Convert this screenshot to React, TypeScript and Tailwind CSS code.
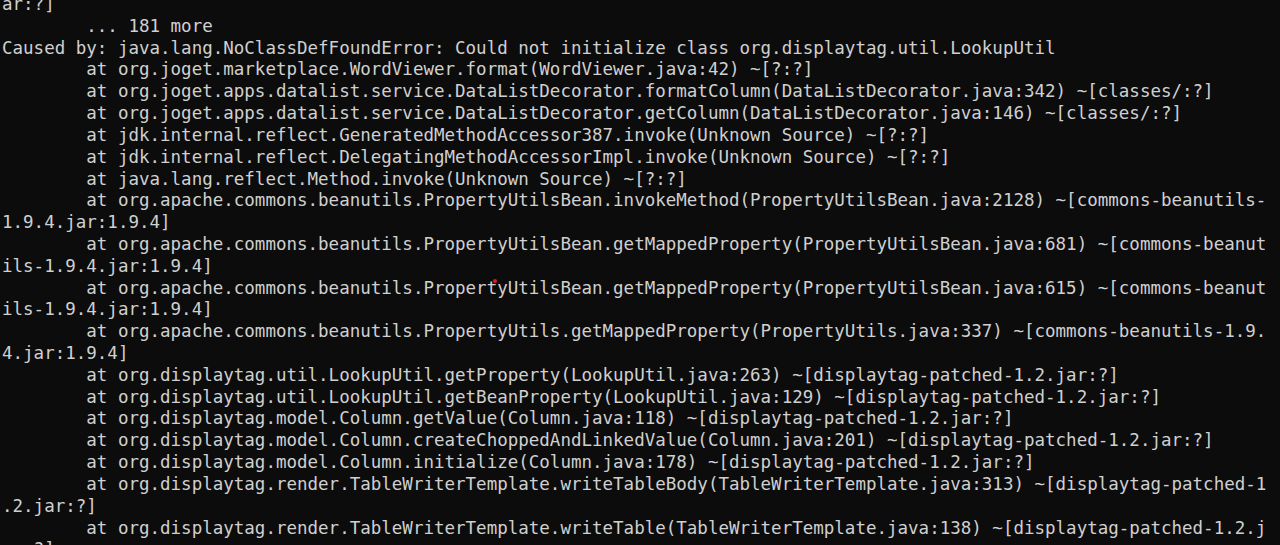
import React from "react";

const lines: string[] = [
  "ar:?]",
  "        ... 181 more",
  "Caused by: java.lang.NoClassDefFoundError: Could not initialize class org.displaytag.util.LookupUtil",
  "        at org.joget.marketplace.WordViewer.format(WordViewer.java:42) ~[?:?]",
  "        at org.joget.apps.datalist.service.DataListDecorator.formatColumn(DataListDecorator.java:342) ~[classes/:?]",
  "        at org.joget.apps.datalist.service.DataListDecorator.getColumn(DataListDecorator.java:146) ~[classes/:?]",
  "        at jdk.internal.reflect.GeneratedMethodAccessor387.invoke(Unknown Source) ~[?:?]",
  "        at jdk.internal.reflect.DelegatingMethodAccessorImpl.invoke(Unknown Source) ~[?:?]",
  "        at java.lang.reflect.Method.invoke(Unknown Source) ~[?:?]",
  "        at org.apache.commons.beanutils.PropertyUtilsBean.invokeMethod(PropertyUtilsBean.java:2128) ~[commons-beanutils-",
  "1.9.4.jar:1.9.4]",
  "        at org.apache.commons.beanutils.PropertyUtilsBean.getMappedProperty(PropertyUtilsBean.java:681) ~[commons-beanut",
  "ils-1.9.4.jar:1.9.4]",
  "        at org.apache.commons.beanutils.PropertyUtilsBean.getMappedProperty(PropertyUtilsBean.java:615) ~[commons-beanut",
  "ils-1.9.4.jar:1.9.4]",
  "        at org.apache.commons.beanutils.PropertyUtils.getMappedProperty(PropertyUtils.java:337) ~[commons-beanutils-1.9.",
  "4.jar:1.9.4]",
  "        at org.displaytag.util.LookupUtil.getProperty(LookupUtil.java:263) ~[displaytag-patched-1.2.jar:?]",
  "        at org.displaytag.util.LookupUtil.getBeanProperty(LookupUtil.java:129) ~[displaytag-patched-1.2.jar:?]",
  "        at org.displaytag.model.Column.getValue(Column.java:118) ~[displaytag-patched-1.2.jar:?]",
  "        at org.displaytag.model.Column.createChoppedAndLinkedValue(Column.java:201) ~[displaytag-patched-1.2.jar:?]",
  "        at org.displaytag.model.Column.initialize(Column.java:178) ~[displaytag-patched-1.2.jar:?]",
  "        at org.displaytag.render.TableWriterTemplate.writeTableBody(TableWriterTemplate.java:313) ~[displaytag-patched-1",
  ".2.jar:?]",
  "        at org.displaytag.render.TableWriterTemplate.writeTable(TableWriterTemplate.java:138) ~[displaytag-patched-1.2.j",
  "ar:?]",
];

export default function App() {
  return (
    <div className="relative h-[545px] w-[1280px] overflow-hidden bg-[#0c0c0c]">
      <div
        className="mt-[-6px] pl-[2px] text-[17.5px] leading-[21.82px] text-[#d0d0d0] whitespace-pre"
        style={{ fontFamily: '"DejaVu Sans Mono", "Liberation Mono", monospace' }}
      >
        {lines.map((l, i) => (
          <div key={i} className="h-[21.82px]">
            {l}
          </div>
        ))}
      </div>
      <div className="absolute left-[493px] top-[279px] h-[4px] w-[4px] rounded-full bg-[#e01b1b]" />
    </div>
  );
}
